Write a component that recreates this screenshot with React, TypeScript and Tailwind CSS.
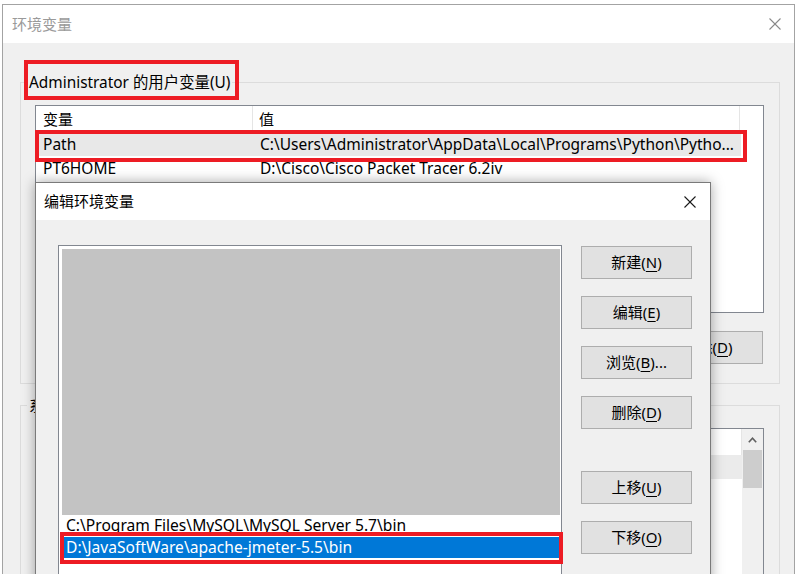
import React from "react";

function CloseX({ color }: { color: string }) {
  return (
    <svg width="12" height="12" viewBox="0 0 12 12" className="shrink-0">
      <line x1="0.5" y1="0.5" x2="11.5" y2="11.5" stroke={color} strokeWidth="1.1" />
      <line x1="11.5" y1="0.5" x2="0.5" y2="11.5" stroke={color} strokeWidth="1.1" />
    </svg>
  );
}

function Btn({ pre, k, post, className = "" }: { pre: string; k: string; post: string; className?: string }) {
  return (
    <div
      className={
        "w-[111px] h-[33px] shrink-0 bg-[#e1e1e1] border border-[#adadad] flex items-center justify-center whitespace-nowrap " +
        className
      }
    >
      <span>
        {pre}
        <span className="underline underline-offset-[3px] decoration-1">{k}</span>
        {post}
      </span>
    </div>
  );
}

export default function App() {
  return (
    <div className="relative w-[798px] h-[574px] overflow-hidden bg-white text-[15px] leading-none text-black font-['Noto_Sans','Noto_Sans_CJK_SC',sans-serif]">
      {/* Outer window: 环境变量 */}
      <div className="ml-[2px] mt-[4px] w-[793px] h-[570px] border-x border-t border-[#a3a3a3] flex flex-col">
        <div className="h-[38px] shrink-0 bg-white flex items-center justify-between pl-[9px] pr-[13px]">
          <span className="text-[#9a9a9a]">环境变量</span>
          <CloseX color="#8a8a8a" />
        </div>
        <div className="flex-1 bg-[#f0f0f0] pl-[17px] pt-[39px]">
          {/* Group 1 */}
          <div className="relative w-[760px] h-[302px] border border-[#dcdcdc]">
            <span className="absolute left-[6px] -top-[8px] px-[2px] bg-[#f0f0f0] whitespace-nowrap text-[15.4px]">
              Administrator 的用户变量(U)
            </span>
            <div className="ml-[14px] mt-[22px] w-[729px] h-[208px] border border-[#828790] bg-white flex flex-col text-[15.5px]">
              <div className="h-[26px] flex shrink-0 text-[15px]">
                <div className="w-[217px] border-r border-[#e5e5e5] flex items-center pl-[7px]">变量</div>
                <div className="w-[487px] border-r border-[#e5e5e5] flex items-center pl-[6px]">值</div>
              </div>
              <div className="h-[24px] pt-[2px] flex bg-[#e8e8e8] w-[705px]">
                <div className="w-[217px] flex items-center pl-[7px]">Path</div>
                <div className="flex-1 flex items-center pl-[7px] whitespace-nowrap">
                  C:\Users\Administrator\AppData\Local\Programs\Python\Pytho...
                </div>
              </div>
              <div className="h-[24px] pt-[2px] flex">
                <div className="w-[217px] flex items-center pl-[7px]">PT6HOME</div>
                <div className="flex-1 flex items-center pl-[7px] whitespace-nowrap">
                  D:\Cisco\Cisco Packet Tracer 6.2iv
                </div>
              </div>
            </div>
            <div className="flex justify-end pr-[16px] mt-[18px]">
              <Btn pre="删除(" k="D" post=")" />
            </div>
          </div>

          {/* Group 2 */}
          <div className="relative mt-[21px] w-[760px] h-[200px] border border-[#dcdcdc]">
            <span className="absolute left-[6px] -top-[8px] px-[2px] bg-[#f0f0f0] whitespace-nowrap">
              系统变量(S)
            </span>
            <div className="ml-[14px] mt-[22px] w-[729px] h-[170px] border border-[#828790] bg-white flex">
              <div className="flex-1 flex flex-col">
                <div className="h-[26px] flex">
                  <div className="w-[217px] border-r border-[#e5e5e5] flex items-center pl-[7px]">变量</div>
                  <div className="flex-1 border-r border-[#e5e5e5] flex items-center pl-[6px]">值</div>
                </div>
                <div className="h-[24px] bg-[#ebebeb]" />
              </div>
              <div className="w-[21px] bg-[#f0f0f0] flex flex-col items-center">
                <div className="h-[21px] w-full flex items-center justify-center">
                  <svg width="9" height="6" viewBox="0 0 9 6">
                    <polyline points="0.8,5.2 4.5,1.2 8.2,5.2" fill="none" stroke="#606060" strokeWidth="1.6" />
                  </svg>
                </div>
                <div className="w-[19px] h-[38px] bg-[#cdcdcd]" />
              </div>
            </div>
          </div>
        </div>
      </div>

      {/* Inner dialog: 编辑环境变量 */}
      <div className="absolute left-[35px] top-[182px] w-[676px] h-[420px] border border-[#7a7a7a] bg-[#f0f0f0] shadow-[0_0_12px_rgba(0,0,0,0.35)] flex flex-col">
        <div className="h-[37px] shrink-0 bg-white flex items-center justify-between pl-[8px] pr-[14px]">
          <span>编辑环境变量</span>
          <CloseX color="#1a1a1a" />
        </div>
        <div className="flex pl-[22px] pt-[25px] gap-[19px]">
          <div className="w-[504px] h-[360px] border border-[#828790] bg-white pt-[3px] pl-[3px] text-[15.6px]">
            <div className="w-[498px] h-[266px] bg-[#c3c3c3]" />
            <div className="h-[22px] flex items-center pl-[4px] whitespace-nowrap">
              C:\Program Files\MySQL\MySQL Server 5.7\bin
            </div>
            <div className="w-[497px] h-[21px] bg-[#0078d7] text-white flex items-center pl-[4px] whitespace-nowrap">
              D:\JavaSoftWare\apache-jmeter-5.5\bin
            </div>
          </div>
          <div className="flex flex-col pt-[1px]">
            <Btn pre="新建(" k="N" post=")" />
            <Btn pre="编辑(" k="E" post=")" className="mt-[17px]" />
            <Btn pre="浏览(" k="B" post=")..." className="mt-[17px]" />
            <Btn pre="删除(" k="D" post=")" className="mt-[17px]" />
            <Btn pre="上移(" k="U" post=")" className="mt-[42px]" />
            <Btn pre="下移(" k="O" post=")" className="mt-[17px]" />
          </div>
        </div>
      </div>

      {/* Red annotation boxes */}
      <div className="absolute left-[24px] top-[60px] w-[215px] h-[40px] border-[4px] border-[#ed1c24]" />
      <div className="absolute left-[35px] top-[130px] w-[712px] h-[32px] border-[4px] border-[#ed1c24]" />
      <div className="absolute left-[60px] top-[532px] w-[503px] h-[32px] border-[4px] border-[#ed1c24]" />
    </div>
  );
}
